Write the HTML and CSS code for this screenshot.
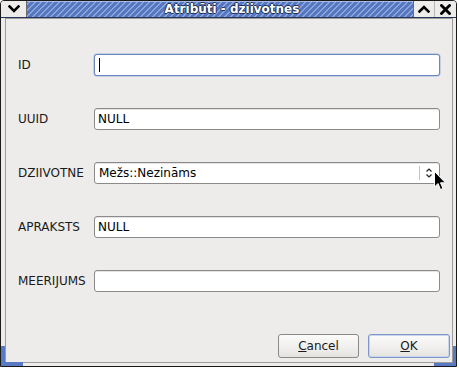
FILE: index.html
```html
<!DOCTYPE html>
<html>
<head>
<meta charset="utf-8">
<link rel="stylesheet" href="styles.css">
</head>
<body>
<div class="window">
  <div class="titlebar">
    <div class="tb-btn tb-menu">
      <svg width="12" height="8" viewBox="0 0 12 8"><path d="M1.5 1.5 L6 6 L10.5 1.5" fill="none" stroke="#000" stroke-width="2.6" stroke-linecap="square"/></svg>
    </div>
    <div class="tb-title"><span>Atribūti - dziivotnes</span></div>
    <div class="tb-btn tb-max">
      <svg width="12" height="8" viewBox="0 0 12 8"><path d="M1.5 6.5 L6 2 L10.5 6.5" fill="none" stroke="#000" stroke-width="2.6" stroke-linecap="square"/></svg>
    </div>
    <div class="tb-btn tb-close">
      <svg width="11" height="11" viewBox="0 0 11 11"><path d="M1.5 1.5 L9.5 9.5 M9.5 1.5 L1.5 9.5" fill="none" stroke="#000" stroke-width="2.8" stroke-linecap="square"/></svg>
    </div>
  </div>
  <div class="client">
    <div class="form">
      <label class="lbl">ID</label>
      <div class="field focus"><span class="caret"></span></div>
      <label class="lbl">UUID</label>
      <div class="field">NULL</div>
      <label class="lbl">DZIIVOTNE</label>
      <div class="field combo"><span class="combo-text">Mežs::Nezināms</span><span class="combo-sep"></span><svg class="combo-arrows" width="8" height="12" viewBox="0 0 8 12"><path d="M1.5 4.5 L4 2 L6.5 4.5 M1.5 7.5 L4 10 L6.5 7.5" fill="none" stroke="#222" stroke-width="1.2"/></svg></div>
      <label class="lbl">APRAKSTS</label>
      <div class="field">NULL</div>
      <label class="lbl">MEERIJUMS</label>
      <div class="field"></div>
    </div>
    <div class="actions">
      <button class="btn"><u>C</u>ancel</button>
      <button class="btn default"><u>O</u>K</button>
    </div>
  </div>
  <div class="corner corner-l"></div>
  <div class="corner corner-r"></div>
  <svg class="pointer" width="13" height="21" viewBox="0 0 13 21"><path d="M0.5 0.5 L0.5 16 L4 12.5 L6.5 18.5 L9 17.5 L6.5 11.8 L11.5 11.8 Z" fill="#000" stroke="#fff" stroke-width="1"/></svg>
</div>
</body>
</html>
```

FILE: styles.css
```css
body {
  margin: 0;
  background: #ffffff;
  font-family: "DejaVu Sans", "Liberation Sans", sans-serif;
  font-size: 12px;
  color: #000;
}

.window {
  position: relative;
  width: 457px;
  height: 367px;
  box-sizing: border-box;
  border: 1px solid #1a1a1a;
  border-radius: 4px 4px 0 0;
  background: #edecea;
  display: flex;
  flex-direction: column;
  overflow: hidden;
}

.titlebar {
  height: 16px;
  display: flex;
  border-bottom: 1px solid #25365a;
  flex: none;
}

.tb-btn {
  background: #edecea;
  display: flex;
  align-items: center;
  justify-content: center;
}

.tb-menu {
  width: 25px;
  border-right: 1px solid #6b6b6b;
}

.tb-max {
  width: 20px;
  border-left: 1px solid #6b6b6b;
  border-right: 1px solid #b8b6b2;
}

.tb-close {
  width: 21px;
}

.tb-title {
  flex: 1;
  background:
    repeating-linear-gradient(135deg, #5676c0 0px, #5676c0 2px, #8aa5dc 2px, #8aa5dc 3.5px, #5676c0 3.5px, #5676c0 4.24px);
  display: flex;
  align-items: center;
  justify-content: center;
  padding-left: 24px;
  box-shadow: inset 0 1px 0 #a9bde6;
}

.tb-title span {
  color: #fff;
  font-weight: bold;
  font-size: 12px;
  text-shadow: 1px 0 0 #1f2f55, -1px 0 0 #1f2f55, 0 1px 0 #1f2f55, 0 -1px 0 #1f2f55;
  white-space: nowrap;
}

.client {
  flex: 1;
  margin: 0 3px 3px 4px;
  border: 1px solid #9d9c9a;
  display: flex;
  flex-direction: column;
  padding: 35px 2px 4px 12px;
}

.form {
  display: grid;
  grid-template-columns: 76px 346px;
  grid-auto-rows: 22px;
  row-gap: 32px;
  align-items: center;
}

.lbl {
  font-size: 12px;
  color: #1a1a1a;
}

.field {
  height: 22px;
  box-sizing: border-box;
  background: #fff;
  border: 1px solid #8c8b89;
  border-radius: 3px;
  padding: 0 3px;
  display: flex;
  align-items: center;
  line-height: 20px;
  box-shadow: inset 0 1px 0 #e4e4e4;
}

.field.focus {
  border-color: #6a87c0;
  box-shadow: 0 0 0 0.5px #9fb3da;
}

.caret {
  width: 1px;
  height: 14px;
  background: #000;
  margin-left: 1px;
}

.combo {
  padding-right: 0;
}

.combo-text {
  flex: 1;
  padding-left: 1px;
}

.combo-sep {
  width: 1px;
  height: 14px;
  background: #c4c3c1;
  margin-right: 5px;
}

.combo-arrows {
  margin-right: 6px;
}

.actions {
  margin-top: auto;
  display: flex;
  justify-content: flex-end;
  gap: 9px;
}

.btn {
  height: 24px;
  box-sizing: border-box;
  font-family: "DejaVu Sans", "Liberation Sans", sans-serif;
  font-size: 12px;
  color: #1a1a1a;
  border: 1px solid #8a8987;
  border-radius: 3px;
  background: linear-gradient(#fbfbfa, #efeeec 60%, #e4e3e0);
  padding: 0;
  width: 81px;
}

.btn.default {
  width: 82px;
  border-color: #7f97c6;
  box-shadow: inset 0 0 0 1px #c8d6ef;
}

.corner {
  position: absolute;
  background: #5879c4;
}

.corner-l {
  left: 0;
  bottom: 0;
  width: 4px;
  height: 20px;
}

.corner-l::after {
  content: "";
  position: absolute;
  left: 0;
  bottom: 0;
  width: 22px;
  height: 4px;
  background: #5879c4;
}

.corner-r {
  right: 0;
  bottom: 0;
  width: 3px;
  height: 20px;
}

.corner-r::after {
  content: "";
  position: absolute;
  right: 0;
  bottom: 0;
  width: 22px;
  height: 3px;
  background: #5879c4;
}

.pointer {
  position: absolute;
  left: 433px;
  top: 170px;
}
```
